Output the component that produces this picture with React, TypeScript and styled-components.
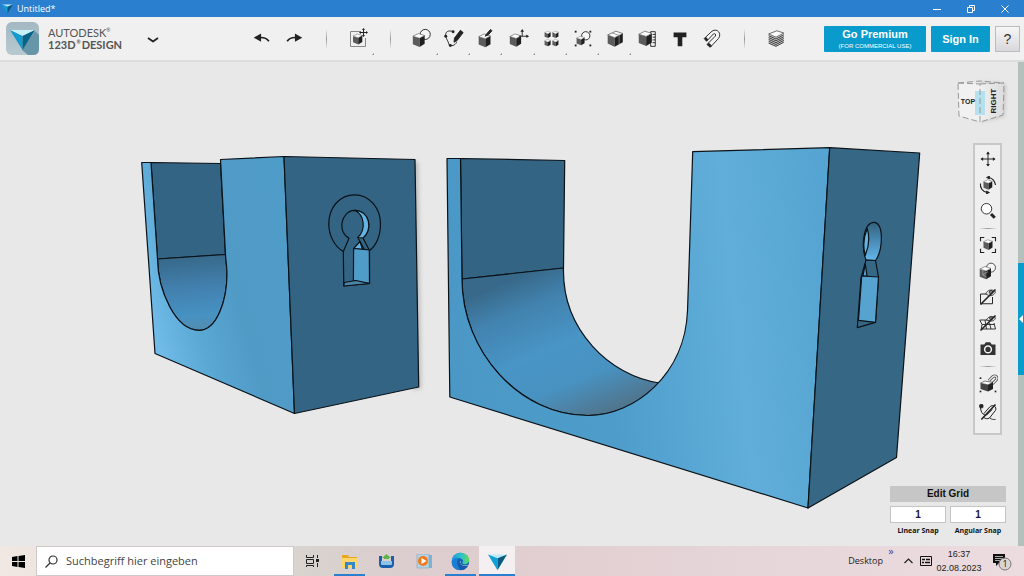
import React from "react";
import styled, { createGlobalStyle } from "styled-components";

const GlobalStyle = createGlobalStyle`
  * { box-sizing: border-box; }
  body { margin: 0; background: #e8e8e8; font-family: "Open Sans", "Noto Sans", sans-serif; }
  button, input { font: inherit; color: inherit; margin: 0; }
  button { border: 0; padding: 0; background: none; }
  svg { display: block; }
`;

const Shell = styled.div`
  display: flex;
  flex-direction: column;
  min-height: 100vh;
`;

/* ---------- title bar ---------- */

const TitleBar = styled.header`
  display: flex;
  align-items: center;
  height: 17px;
  padding: 0 2px;
  background: #2a7fcf;
  color: #fff;
`;

const WindowTitle = styled.h1`
  flex: 1;
  margin: 0 0 0 4px;
  font-size: 9px;
  line-height: 16px;
  font-weight: 400;
`;

const WindowButton = styled.button`
  display: flex;
  align-items: center;
  justify-content: center;
  width: 34px;
  height: 17px;
`;

/* ---------- tool bar ---------- */

const ToolBar = styled.div`
  display: flex;
  align-items: center;
  height: 45px;
  padding: 0 4px 0 6px;
  background: #f0f0f0;
  border-bottom: 2px solid #dcdcdc;
`;

const Brand = styled.div`
  display: flex;
  align-items: center;
  gap: 9px;
  width: 134px;
`;

const BrandName = styled.div`
  display: flex;
  flex-direction: column;
  font-family: Lato, sans-serif;
  font-size: 11px;
  line-height: 12px;
  color: #555;
  white-space: nowrap;
`;

const BrandLine = styled.span<{ $strong?: boolean }>`
  display: flex;
  gap: ${(p) => (p.$strong ? 1 : 0)}px;
  font-weight: ${(p) => (p.$strong ? 700 : 400)};
`;

const Mark = styled.span`
  font-size: 5px;
  line-height: 7px;
`;

const Tools = styled.nav`
  display: flex;
  flex: 1;
  padding-left: 80px;
`;

const ToolGroup = styled.div`
  display: grid;
  grid-template-columns: repeat(10, 1fr);
  width: 322px;
`;

const ToolButton = styled.button<{ $menu?: boolean }>`
  position: relative;
  display: flex;
  align-items: center;
  justify-content: center;
  width: 32px;
  height: 43px;

  &::after {
    content: "";
    display: ${(p) => (p.$menu ? "block" : "none")};
    position: absolute;
    right: 0;
    bottom: 5px;
    border: 1px solid #8a8a8a;
    border-top-color: transparent;
    border-left-color: transparent;
  }
`;

const MenuButton = styled(ToolButton)`
  width: 26px;
`;

const Divider = styled.div`
  display: flex;
  align-items: center;
  justify-content: center;
  width: 32px;

  &::before {
    content: "";
    width: 1px;
    height: 20px;
    background: linear-gradient(#f0f0f0, #999, #f0f0f0);
  }
`;

const Account = styled.div`
  display: flex;
  gap: 5px;
  font-family: "Liberation Sans", sans-serif;
`;

const BlueButton = styled.button<{ $width: number }>`
  width: ${(p) => p.$width}px;
  height: 26px;
  border-radius: 1px;
  background: #0a9bcd;
  color: #fff;
  font-size: 11px;
  line-height: 14px;
  font-weight: 700;
`;

const SmallPrint = styled.span`
  display: block;
  font-size: 6px;
  line-height: 10px;
  font-weight: 400;
`;

const HelpButton = styled.button`
  width: 25px;
  height: 26px;
  border: 1px solid #bcbcbc;
  background: linear-gradient(#f6f6f6, #d8d8dc);
  color: #333;
  font-size: 14px;
  line-height: 24px;
`;

/* ---------- workspace ---------- */

const Workspace = styled.main`
  display: flex;
  flex: 1;
  min-height: 484px;
`;

const Canvas = styled.section`
  position: relative;
  flex: 1;
  background: #e8e8e8;
`;

const Scene = styled.svg`
  position: absolute;
  inset: 0;
  width: 100%;
  height: 100%;
`;

const ViewCube = styled.div`
  position: absolute;
  top: 16px;
  right: 8px;
`;

const NavBar = styled.nav`
  position: absolute;
  top: 81px;
  right: 16px;
  display: flex;
  flex-direction: column;
  align-items: center;
  width: 29px;
  padding: 1px 0 7px;
  border: 2px solid #c8c8c8;
  background: #efefef;
`;

const NavButton = styled.button<{ $tall?: boolean }>`
  display: flex;
  align-items: center;
  justify-content: center;
  width: 25px;
  height: ${(p) => (p.$tall ? 28 : 26)}px;
`;

const NavRule = styled.div`
  width: 18px;
  height: 1px;
  margin: 4px 0 3px;
  background: linear-gradient(90deg, #efefef, #999, #efefef);
`;

const GridPanel = styled.form`
  position: absolute;
  right: 12px;
  bottom: 9px;
  display: grid;
  grid-template-columns: 56px 56px;
  gap: 4px;
  font-family: "Liberation Sans", sans-serif;
  font-weight: 700;
  color: #111;
  text-align: center;
`;

const EditGrid = styled.button`
  grid-column: 1 / -1;
  height: 16px;
  background: #c6c6c6;
  font-size: 10px;
  line-height: 16px;
  font-weight: 700;
`;

const SnapField = styled.label`
  display: flex;
  flex-direction: column-reverse;
  gap: 2px;
  font-family: "Open Sans", sans-serif;
  font-size: 7px;
  line-height: 12px;
  white-space: nowrap;
`;

const SnapInput = styled.input`
  width: 100%;
  height: 17px;
  padding: 0;
  border: 1px solid #c4c4c4;
  background: #fff;
  color: #1c1440;
  font-family: "Liberation Sans", sans-serif;
  font-size: 10px;
  font-weight: 700;
  text-align: center;
`;

const SideStrip = styled.aside`
  width: 6px;
  padding-top: 201px;
  background: #b5c0bd;
`;

const SideHandle = styled.button`
  display: flex;
  align-items: center;
  justify-content: center;
  width: 6px;
  height: 112px;
  background: #0a9bcd;
`;

/* ---------- task bar ---------- */

const TaskBar = styled.footer`
  display: flex;
  height: 30px;
  background: linear-gradient(90deg, #f1e8e3 0, #d8d3cf 30%, #dccdce 40%, #e2cfd1 55%, #e6d6da 75%, #ecdcdf 100%);
  color: #222;
`;

const StartButton = styled.button`
  display: flex;
  align-items: center;
  justify-content: center;
  width: 36px;
`;

const SearchBox = styled.label`
  display: flex;
  align-items: center;
  gap: 8px;
  width: 258px;
  padding-left: 8px;
  border: 1px solid #cfcac8;
  background: #fff;
`;

const SearchInput = styled.input`
  width: 220px;
  padding: 0;
  border: 0;
  outline: 0;
  font-size: 11px;
  line-height: 16px;

  &::placeholder {
    color: #444;
    opacity: 1;
  }
`;

const Tasks = styled.div`
  display: flex;
  flex: 1;
`;

const Task = styled.button<{ $open?: boolean; $active?: boolean }>`
  display: flex;
  align-items: center;
  justify-content: center;
  width: ${(p) => (p.$active ? 36 : 31)}px;
  margin: 0 ${(p) => (p.$active ? 0 : 3)}px;
  background: ${(p) => (p.$active ? "#f4eff0" : "none")};
  border-top: 2px solid transparent;
  border-bottom: 2px solid ${(p) => (p.$open ? "#2a7fcf" : "transparent")};
`;

const Tray = styled.div`
  display: flex;
  align-items: center;
  padding-right: 5px;
  font-size: 9px;
  line-height: 14px;
`;

const More = styled.button`
  align-self: flex-start;
  width: 16px;
  color: #3a4a9c;
  font-size: 11px;
  line-height: 9px;
`;

const TrayButton = styled.button<{ $wide?: boolean }>`
  display: flex;
  align-items: center;
  justify-content: center;
  width: ${(p) => (p.$wide ? 36 : 18)}px;
  height: 28px;
`;

const Clock = styled.time`
  width: 48px;
  font-family: "Liberation Sans", sans-serif;
  text-align: center;
`;

/* ---------- icons ---------- */

type CubeProps = { x?: number; y?: number; s?: number };

const Cube = ({ x = 4, y = 5, s = 1 }: CubeProps) => (
  <g transform={`translate(${x} ${y}) scale(${s})`} stroke="none">
    <path d="M0 3.500L8.500 6v11L0 13.500z" fill="#5c5c5c" />
    <path d="M8.500 6L15 2.500v10.500L8.500 17z" fill="#1f1f1f" />
    <path d="M0 3.500L7 0l8 2.500L8.500 6z" fill="#fcfcfc" />
    <path d="M0 3.500L7 0l8 2.500L8.500 6z" fill="none" stroke="#444" strokeWidth=".7" strokeLinejoin="round" />
  </g>
);

const Svg = ({ size = 22, children }: { size?: number; children: React.ReactNode }) => (
  <svg width={size} height={size} viewBox="0 0 24 24" fill="none" stroke="#222" strokeWidth="1" aria-hidden="true">
    {children}
  </svg>
);

const UndoIcon = () => (
  <Svg>
    <path d="M3 10.500l8-4.500v9z" fill="#222" stroke="none" />
    <path d="M9 10.500c5-.5 8 .5 10.500 4" strokeWidth="1.800" />
  </Svg>
);
const RedoIcon = () => (
  <Svg>
    <path d="M21 10.500l-8-4.500v9z" fill="#222" stroke="none" />
    <path d="M15 10.500c-5-.5-8 .5-10.500 4" strokeWidth="1.800" />
  </Svg>
);
const TransformIcon = () => (
  <Svg size={24}>
    <path d="M14 4.500H4.500v15h15V11" stroke="#888" />
    <Cube x={7} y={7} s={0.620} />
    <path d="M17.500 2v7M14 5.500h7" />
    <path d="M17.500 1l1.500 2h-3zM17.500 10l1.500-2h-3zM13 5.500l2-1.500v3zM22 5.500l-2-1.500v3z" fill="#222" stroke="none" />
  </Svg>
);
const PrimitivesIcon = () => (
  <Svg>
    <circle cx="15.500" cy="7" r="5.500" fill="#f6f6f6" />
    <Cube x={2} y={6} s={0.860} />
  </Svg>
);
const SketchIcon = () => (
  <Svg>
    <path d="M11 4C6 2 2 4 3 9c1 4 3 6 4 10 4 1 7-1 8-4" />
    <path d="M19 2.500l3 2.500-6.500 8.500-3.500 2 .5-4.500z" fill="#222" />
    <g fill="#222" stroke="none">
      <circle cx="11" cy="4" r="1.600" /><circle cx="3" cy="9" r="1.600" /><circle cx="8" cy="19" r="1.600" />
    </g>
  </Svg>
);
const ConstructIcon = () => (
  <Svg>
    <Cube x={4} y={6.500} s={0.860} />
    <path d="M11 9l2-3 4-4.500 1.500 1.500-4 4.500z" fill="#222" />
  </Svg>
);
const ModifyIcon = () => (
  <Svg>
    <Cube x={2} y={6.500} s={0.820} />
    <path d="M12 9h9M15.500 9V3" />
    <path d="M23 9l-3-2v4zM15.500 1l-2 3h4z" fill="#222" stroke="none" />
  </Svg>
);
const PatternIcon = () => (
  <Svg>
    <Cube x={5} y={3.500} s={0.440} /><Cube x={13.500} y={3.500} s={0.440} />
    <Cube x={5} y={12.500} s={0.440} /><Cube x={13.500} y={12.500} s={0.440} />
  </Svg>
);
const GroupIcon = () => (
  <Svg>
    <circle cx="15" cy="8.500" r="4.500" fill="#f6f6f6" />
    <Cube x={5} y={9} s={0.580} />
    <g fill="#222" stroke="none">
      <rect x="3" y="3" width="2" height="2" /><rect x="19" y="3" width="2" height="2" />
      <rect x="3" y="18" width="2" height="2" /><rect x="19" y="18" width="2" height="2" />
    </g>
  </Svg>
);
const CombineIcon = () => (
  <Svg>
    <g stroke="none">
      <path d="M4 7.500l7.500 3v10L4 17z" fill="#5c5c5c" />
      <path d="M11.500 10.500l9-4.500v9.500l-9 5z" fill="#1f1f1f" />
    </g>
    <path d="M4 7.500L13 3.500l7.500 2.500-9 4.500z" fill="#fcfcfc" stroke="#444" strokeWidth=".7" />
    <path d="M9 5.500l7.500 2.500v9.500" stroke="#888" strokeWidth=".9" />
  </Svg>
);
const MeasureIcon = () => (
  <Svg>
    <path d="M16 4h5v16h-5z" fill="#f6f6f6" />
    <path d="M21 7h-3M21 10h-3M21 13h-3M21 16h-3" />
    <Cube x={3} y={3.500} s={0.950} />
  </Svg>
);
const TextIcon = () => (
  <Svg>
    <path d="M5 5h14v5h-4.500v10h-5V10H5z" fill="#222" stroke="none" />
  </Svg>
);
const MagnetIcon = () => (
  <Svg>
    <path d="M5 10l7-6.500c6-4 11 3 7 8l-7.500 8-3.500-3L15.500 9c1.500-2-.5-3.500-2-2.500L7.500 13z" fill="#f4f4f4" />
    <path d="M5 10l-1.500 1.500 2.500 3L7.500 13zM8 16.500L6.500 18l3.500 3 1.500-1.500z" fill="#222" />
  </Svg>
);
const MaterialIcon = () => (
  <Svg>
    <path d="M4 6.500l8 3.500v10.500L4 17zM20.500 5.500v10L12 20.500V10z" fill="#ccc" stroke="none" />
    <path d="M4 6.500L13 3l7.500 2.500L12 10z" fill="#fafafa" strokeWidth=".7" />
    <path d="M4 8.500l8 3.500 8.500-4.500M4 10.500l8 3.500 8.500-4.500M4 12.500l8 3.500 8.500-4.500M4 14.500l8 3.500 8.500-4.500M4 16.500l8 3.500 8.500-4.500" strokeWidth="1" stroke="#333" />
  </Svg>
);

const PanIcon = () => (
  <Svg size={18}>
    <path d="M12 3v18M3 12h18" strokeWidth="1.300" />
    <path d="M12 2l2.500 3.500h-5zM12 22l2.500-3.500h-5zM2 12l3.500-2.500v5zM22 12l-3.500-2.500v5z" fill="#222" stroke="none" />
  </Svg>
);
const OrbitIcon = () => (
  <Svg size={18}>
    <Cube x={6} y={5} s={0.780} />
    <path d="M13 2c5 1 8 4 9 10M2 10c-1 6 3 11 9 12" strokeWidth="1.500" />
    <path d="M10 2l4-2v4zM14 22l-4-2v4z" fill="#222" />
  </Svg>
);
const ZoomIcon = () => (
  <Svg size={18}>
    <circle cx="10" cy="9" r="7" fill="#fff" strokeWidth="1.200" />
    <path d="M16 16l5 5" strokeWidth="4" />
  </Svg>
);
const FitIcon = () => (
  <Svg size={18}>
    <Cube x={6} y={5} s={0.800} />
    <path d="M7 2H2v5M17 2h5v5M7 22H2v-5M17 22h5v-5" strokeWidth="1.500" />
  </Svg>
);
const ShadedIcon = () => (
  <Svg size={18}>
    <circle cx="16" cy="7.500" r="6" fill="#f6f6f6" />
    <Cube x={1} y={6} />
    <path d="M5 9v8l5 3M5 17l7-4" stroke="#bbb" strokeWidth=".8" />
  </Svg>
);
const HideSolidIcon = () => (
  <Svg size={18}>
    <path d="M11 8H2v13h16v-9" strokeWidth="1.300" />
    <path d="M9 8c2-6 9-7 13-3-1 4-5 6-9 5z" fill="#ddd" />
    <circle cx="16" cy="5.500" r="2.300" fill="#888" />
    <path d="M22 2L2 22" strokeWidth="2.200" />
  </Svg>
);
const HideMeshIcon = () => (
  <Svg size={18}>
    <path d="M1 8h18M1 8l3 6-1 6h19l-2-8M4 14h16M8 8l2 12M14 12l2 8" strokeWidth="1.200" />
    <path d="M10 8c2-5 8-6 12-3-1 4-4 5-8 4z" fill="#ddd" />
    <circle cx="16" cy="5.500" r="2" fill="#888" />
    <path d="M22 2L2 22" strokeWidth="2.200" />
  </Svg>
);
const CameraIcon = () => (
  <Svg size={18}>
    <path d="M2 6h5l2-3h6l2 3h5v14H2z" fill="#333" stroke="none" />
    <circle cx="12" cy="12.500" r="4.500" stroke="#f4f4f4" strokeWidth="2" />
  </Svg>
);
const SnapOnIcon = () => (
  <Svg size={20}>
    <path d="M13 8l5-5c3-2 6 1 4 4l-5 5" strokeWidth="3.500" stroke="#555" />
    <path d="M13 8l5-5c3-2 6 1 4 4l-5 5" strokeWidth="1.500" stroke="#f4f4f4" />
    <path d="M3 11l9 2v8l-9-3z" fill="#444" stroke="none" />
    <path d="M12 13l6-3v8l-6 3z" fill="#222" stroke="none" />
    <path d="M3 11l5-2.500L18 10l-6 3z" fill="#f8f8f8" strokeWidth=".7" />
    <g fill="#222" stroke="none"><rect x="2" y="4" width="2" height="2" /><rect x="2" y="20" width="2" height="2" /><rect x="20" y="20" width="2" height="2" /></g>
  </Svg>
);
const SnapOffIcon = () => (
  <Svg size={20}>
    <path d="M3 6c0 5 2 9 6 10M7 14l7-8c4-4 9 0 7 4l-7 9c-3 2-5 1-8-1M10 16l7-7" strokeWidth="1.200" />
    <rect x="2" y="3" width="4" height="4" rx="1" fill="#222" />
    <path d="M14 19c2 2 4 2 7 2" />
    <path d="M21 3L4 21" strokeWidth="2" />
  </Svg>
);

const Gem = ({ size }: { size: number }) => (
  <svg width={size} height={size} viewBox="0 0 24 24" aria-hidden="true">
    <path d="M0 3l12 5 12-5z" fill="#b8ecfa" />
    <path d="M0 3l12 5v15z" fill="#12a0d4" />
    <path d="M24 3L12 8v15z" fill="#0a5a80" />
  </svg>
);

const AppLogo = () => (
  <svg width="33" height="33" viewBox="0 0 33 33" aria-hidden="true">
    <defs>
      <linearGradient id="tile" x1="0" y1="0" x2="0" y2="1">
        <stop offset="0" stopColor="#a3b8c3" /><stop offset="1" stopColor="#b9c9d0" />
      </linearGradient>
    </defs>
    <rect width="33" height="33" rx="6" fill="url(#tile)" />
    <path d="M29 9l4 4v14q0 6-6 6h-5l-6-5z" fill="#6796a9" />
    <path d="M4 8l12.500 6L29 8z" fill="#c6f0fa" />
    <path d="M4 8l12.500 6v14z" fill="#139bd0" />
    <path d="M29 8l-12.500 6v14z" fill="#086286" />
  </svg>
);

/* ---------- 3D scene ---------- */

const Models = () => (
  <Scene viewBox="0 62 1018 484" preserveAspectRatio="xMidYMid meet" role="img" aria-label="Two bracket models">
    <defs>
      <linearGradient id="frontA" gradientUnits="userSpaceOnUse" x1="142" y1="300" x2="290" y2="260">
        <stop offset="0" stopColor="#72bde9" /><stop offset=".3" stopColor="#5ba8d4" /><stop offset=".6" stopColor="#509ac6" /><stop offset="1" stopColor="#509cc8" />
      </linearGradient>
      <linearGradient id="boreA" gradientUnits="userSpaceOnUse" x1="190" y1="257" x2="196" y2="330">
        <stop offset="0" stopColor="#37698a" /><stop offset=".4" stopColor="#427fad" /><stop offset=".8" stopColor="#4692c3" /><stop offset="1" stopColor="#538cae" />
      </linearGradient>
      <linearGradient id="frontB" gradientUnits="userSpaceOnUse" x1="450" y1="340" x2="830" y2="300">
        <stop offset="0" stopColor="#4b98c6" /><stop offset=".4" stopColor="#4d9cca" /><stop offset=".75" stopColor="#61aeda" /><stop offset="1" stopColor="#56a4d1" />
      </linearGradient>
      <linearGradient id="boreB" gradientUnits="userSpaceOnUse" x1="530" y1="272" x2="590" y2="418">
        <stop offset="0" stopColor="#38698a" /><stop offset=".2" stopColor="#4282ae" /><stop offset=".5" stopColor="#4895c6" /><stop offset=".75" stopColor="#4892c1" /><stop offset="1" stopColor="#50768f" />
      </linearGradient>
      <linearGradient id="hole" x1="0" y1="0" x2="0" y2="1">
        <stop offset="0" stopColor="#34607c" /><stop offset=".35" stopColor="#427fa6" /><stop offset="1" stopColor="#64b7ea" />
      </linearGradient>
      <filter id="soft" x="-20%" y="-5%" width="150%" height="110%"><feGaussianBlur stdDeviation="2" /></filter>
    </defs>

    <path d="M410 162l8 0 3 226-8 2z" fill="#999" opacity=".6" filter="url(#soft)" />

    <g stroke="#0b1218" strokeWidth="1.200" strokeLinejoin="round">
      <path d="M151 162.500L220.500 163.500 225.500 254.500 157.500 259z" fill="#336483" />
      <path d="M157.500 259L225.500 254.500C226 262 227 268 227 274 227 300 217 330.300 199 330.300 175 330.300 158 290 157.500 259z" fill="url(#boreA)" />
      <path d="M141.700 162.500H151L157.500 259C158 290 175 330.300 199 330.300 217 330.300 227 300 227 274 227 268 226 262 225.500 254.500L220.500 159.500 284 156.500 294.500 413.500 155 353.500z" fill="url(#frontA)" />
      <path d="M284 156.500L415 159.500 418.700 387 294.500 413.500z" fill="#336483" />
      <path d="M343.300 251.500C335 247 328.800 236 328.800 224 328.800 207 340 194.800 354.700 194.800S380.500 208 380.500 224C380.500 236 376 246 369.500 250.500" fill="none" />
      <path d="M349 238.300C337 232 341 211 354.500 210.300 370 210.500 373 230 363 238L369.500 250.500V283.500L343.800 286 343.300 251.500z" fill="#336483" />
      <path d="M354.500 210.300C370 210.500 373 230 363 238L357.700 237.500C366 230 365 215 354.500 210.300z" fill="#63b4e3" />
      <path d="M360 241.500L353.600 248.500 362.500 249.500z" fill="#63b4e3" />
      <path d="M357.700 237.500L360 241.500 364.500 250" fill="none" />
      <path d="M353.600 248.500L369.300 249.800 369.500 283.500 353.400 280.500z" fill="#509cc8" />
      <path d="M343.800 286L344.300 282.500 356 280.500 369.500 283.500z" fill="#4c84a5" />
    </g>

    <g stroke="#0b1218" strokeWidth="1.200" strokeLinejoin="round">
      <path d="M460.500 158.500L564.700 160.500 563.500 268 462 279z" fill="#336483" />
      <path d="M462 279L563.500 268C562 330 610 376 659.500 383 640 403 617 415.500 588 415.500 520 415.500 462 352 462 279z" fill="url(#boreB)" />
      <path d="M447 158.500H460.500L462 279C462 352 520 415.500 588 415.500 635 415.500 685 374 687.500 311L689 267 692.700 151.700 829.700 147.700 808 508 449.800 397z" fill="url(#frontB)" />
      <path d="M829.700 147.700L919.700 153 896.500 457.500 808 508z" fill="#366785" />
      <path d="M866 260C861 247 863 222 874.500 222.300 884 224 883 250 875.500 260.500z" fill="url(#hole)" />
      <path d="M867.300 228.300Q871 242 865.300 255.300 861.500 242 867.300 228.300z" fill="#63b4e3" />
      <path d="M866 260L875.500 260.500 878.500 277 875.500 322.300 857.300 327.700 861 278z" fill="#366785" />
      <path d="M865.300 264L863 276H867z" fill="#55a6d5" />
      <path d="M861.700 276L878.500 277 875.500 322.300 858.500 320.300z" fill="#56a3d0" />
    </g>
  </Scene>
);

const CubeText = styled.text<{ $size: number }>`
  font-family: "Liberation Sans", sans-serif;
  font-size: ${(p) => p.$size}px;
  font-weight: 700;
  fill: #222;
  text-anchor: middle;
`;

const OrientationCube = () => (
  <svg width="56" height="48" viewBox="0 0 56 48" role="img" aria-label="View orientation">
    <defs>
      <filter id="cubeShade" x="-30%" y="-30%" width="160%" height="160%"><feGaussianBlur stdDeviation="2" /></filter>
      <linearGradient id="cubeRight"><stop offset="0" stopColor="#f0f0f0" /><stop offset="1" stopColor="#dcdcdc" /></linearGradient>
    </defs>
    <path d="M26 5l25 1-1 32-24 5z" fill="#888" opacity=".5" filter="url(#cubeShade)" />
    <path d="M4 5l22 1v38L5 38z" fill="#f1f1f1" />
    <path d="M26 6l24-1-1 32-23 7z" fill="url(#cubeRight)" />
    <rect x="21" y="13" width="10" height="24" fill="#b5e0ee" />
    <path d="M4 5l22 1v38L5 38zM26 6l24-1-1 32-23 7M4 5l22-2 24 2" fill="none" stroke="#999" strokeDasharray="6 3" />
    <CubeText $size={7} x="14" y="26">TOP</CubeText>
    <CubeText $size={8} transform="translate(42 23) rotate(-90)">RIGHT</CubeText>
  </svg>
);

const tools = [
  { name: "Primitives", Icon: PrimitivesIcon, menu: true },
  { name: "Sketch", Icon: SketchIcon, menu: true },
  { name: "Construct", Icon: ConstructIcon, menu: true },
  { name: "Modify", Icon: ModifyIcon, menu: true },
  { name: "Pattern", Icon: PatternIcon, menu: true },
  { name: "Grouping", Icon: GroupIcon, menu: true },
  { name: "Combine", Icon: CombineIcon, menu: true },
  { name: "Measure", Icon: MeasureIcon, menu: false },
  { name: "Text", Icon: TextIcon, menu: false },
  { name: "Snap", Icon: MagnetIcon, menu: false },
];

export default function App() {
  return (
    <Shell>
      <GlobalStyle />
      <TitleBar>
        <Gem size={11} />
        <WindowTitle>Untitled*</WindowTitle>
        <WindowButton aria-label="Minimize">
          <svg width="8" height="8" stroke="#fff"><path d="M0 4.500h8" /></svg>
        </WindowButton>
        <WindowButton aria-label="Restore">
          <svg width="8" height="8" fill="none" stroke="#fff"><path d="M.5 2.500h5v5h-5zM2.500 2.500v-2h5v5h-2" /></svg>
        </WindowButton>
        <WindowButton aria-label="Close">
          <svg width="8" height="8" stroke="#fff"><path d="M.5.5l7 7M7.500.5l-7 7" /></svg>
        </WindowButton>
      </TitleBar>

      <ToolBar>
        <Brand>
          <AppLogo />
          <BrandName>
            <BrandLine>AUTODESK<Mark>®</Mark></BrandLine>
            <BrandLine $strong>123D<Mark>®</Mark> DESIGN</BrandLine>
          </BrandName>
        </Brand>
        <MenuButton aria-label="Application menu">
          <svg width="12" height="10" fill="none" stroke="#222" strokeWidth="1.800"><path d="M1 4l5 3.500L11 4" strokeLinejoin="round" /></svg>
        </MenuButton>
        <Tools>
          <ToolButton aria-label="Undo"><UndoIcon /></ToolButton>
          <ToolButton aria-label="Redo"><RedoIcon /></ToolButton>
          <Divider />
          <ToolButton aria-label="Transform" $menu><TransformIcon /></ToolButton>
          <Divider />
          <ToolGroup>
            {tools.map(({ name, Icon, menu }) => (
              <ToolButton key={name} aria-label={name} $menu={menu}><Icon /></ToolButton>
            ))}
          </ToolGroup>
          <Divider />
          <ToolButton aria-label="Material"><MaterialIcon /></ToolButton>
        </Tools>
        <Account>
          <BlueButton $width={102}>Go Premium<SmallPrint>(FOR COMMERCIAL USE)</SmallPrint></BlueButton>
          <BlueButton $width={59}>Sign In</BlueButton>
          <HelpButton aria-label="Help">?</HelpButton>
        </Account>
      </ToolBar>

      <Workspace>
        <Canvas>
          <Models />
          <ViewCube><OrientationCube /></ViewCube>
          <NavBar aria-label="Navigation">
            <NavButton aria-label="Pan"><PanIcon /></NavButton>
            <NavButton aria-label="Orbit"><OrbitIcon /></NavButton>
            <NavButton aria-label="Zoom"><ZoomIcon /></NavButton>
            <NavRule />
            <NavButton aria-label="Fit"><FitIcon /></NavButton>
            <NavButton aria-label="Shading"><ShadedIcon /></NavButton>
            <NavButton aria-label="Hide solids"><HideSolidIcon /></NavButton>
            <NavButton aria-label="Hide meshes"><HideMeshIcon /></NavButton>
            <NavButton aria-label="Screenshot"><CameraIcon /></NavButton>
            <NavRule />
            <NavButton aria-label="Snap while moving" $tall><SnapOnIcon /></NavButton>
            <NavButton aria-label="Snap off" $tall><SnapOffIcon /></NavButton>
          </NavBar>
          <GridPanel>
            <EditGrid type="button">Edit Grid</EditGrid>
            <SnapField>Linear Snap<SnapInput defaultValue="1" /></SnapField>
            <SnapField>Angular Snap<SnapInput defaultValue="1" /></SnapField>
          </GridPanel>
        </Canvas>
        <SideStrip>
          <SideHandle aria-label="Open parts library">
            <svg width="4" height="8"><path d="M4 0v8L0 4z" fill="#fff" /></svg>
          </SideHandle>
        </SideStrip>
      </Workspace>

      <TaskBar>
        <StartButton aria-label="Start">
          <svg width="13" height="13" fill="#000"><path d="M0 2l5.500-1v5H0zM6.500 1L13 0v6H6.500zM0 7h5.500v5L0 11zM6.500 7H13v6l-6.500-1z" /></svg>
        </StartButton>
        <SearchBox aria-label="Suche">
          <svg width="13" height="13" fill="none" stroke="#333" strokeWidth="1.200"><circle cx="8" cy="5" r="4" /><path d="M5 8l-4.500 4.500" /></svg>
          <SearchInput placeholder="Suchbegriff hier eingeben" />
        </SearchBox>
        <Tasks>
          <Task aria-label="Task view">
            <svg width="13" height="12" fill="none" stroke="#222"><path d="M.5 0v2.500h7V0M.5 4.500h7v4h-7zM.5 12v-1.500h7V12M11.500 0v3M11.500 8v4" /><path d="M10 4h3v3h-3z" fill="#222" stroke="none" /></svg>
          </Task>
          <Task aria-label="Explorer" $open>
            <svg width="16" height="15"><path d="M0 1h6l1 2h8v11H0z" fill="#e9a91f" /><path d="M0 4h16v10H0z" fill="#ffd667" /><path d="M3 8h10v7h-3v-4H6v4H3z" fill="#3787cb" /></svg>
          </Task>
          <Task aria-label="Installer">
            <svg width="17" height="15"><path d="M1 2h3v5h9V2h3v8q0 4-4 4H5q-4 0-4-4z" fill="#1b5faa" /><path d="M3 7h11v3q0 1-1 1H4q-1 0-1-1z" fill="#8bc3e8" /><path d="M8.500 0L13 4h-2v1H6V4H4z" fill="#5fb54a" /></svg>
          </Task>
          <Task aria-label="Media player">
            <svg width="16" height="15"><path d="M4 1h12v13H4z" fill="#7fb1d0" /><path d="M1 0h12v14H1z" fill="#b5d2e2" stroke="#7ba7c0" strokeWidth=".6" /><circle cx="7" cy="7" r="5" fill="#f07a1c" /><path d="M5.500 4l5 3-5 3z" fill="#fff" /></svg>
          </Task>
          <Task aria-label="Browser" $open>
            <svg width="19" height="19" viewBox="0 0 24 24">
              <defs><linearGradient id="wave"><stop offset="0" stopColor="#1b9de0" /><stop offset=".55" stopColor="#2fc3c9" /><stop offset="1" stopColor="#66d85a" /></linearGradient></defs>
              <circle cx="12" cy="12" r="11" fill="#1260b4" />
              <path d="M1 11C2 4 7 1 12 1c7 0 11 5 11 9 0 5-7 7-9 4 3-3 0-6-4-6-5 0-9 3-9 6z" fill="url(#wave)" />
              <path d="M1 12c1-4 7-6 10-4-5 2-5 10 3 13-6 4-14-1-13-9z" fill="#1a7fd4" />
              <path d="M13 11c-3 5 4 8 10 5-1 2-3 4-5 5-6 0-10-6-5-10z" fill="#eadfe2" />
              <path d="M12 13c0 4 5 6 10 4-2 4-6 6-10 5-4-3-4-8 0-9z" fill="#1559a8" />
            </svg>
          </Task>
          <Task aria-label="123D Design" $open $active><Gem size={19} /></Task>
        </Tasks>
        <Tray>
          Desktop
          <More aria-label="More toolbars">»</More>
          <TrayButton aria-label="Hidden icons"><svg width="9" height="6" fill="none" stroke="#222" strokeWidth="1.200"><path d="M.5 5l4-4 4 4" /></svg></TrayButton>
          <TrayButton aria-label="Keyboard"><svg width="12" height="10" fill="none" stroke="#111"><path d="M.5.5h11v9H.5z" /><path d="M2 3.500h3M6 3.500h4M2 6.500h2M5 6.500h5" strokeWidth="1.500" /></svg></TrayButton>
          <Clock>16:37<br />02.08.2023</Clock>
          <TrayButton $wide aria-label="Notifications">
            <svg width="20" height="20" viewBox="0 0 20 20" overflow="visible">
              <path d="M2 3h12v9H8l-3 3v-3H2z" fill="#111" /><path d="M4 5.500h8M4 7.500h8M4 9.500h5" stroke="#eee" strokeWidth=".7" />
              <circle cx="14" cy="13" r="6" fill="#dcd3d5" stroke="#777" />
              <text x="14" y="16" textAnchor="middle" fontSize="9" fill="#111">1</text>
            </svg>
          </TrayButton>
        </Tray>
      </TaskBar>
    </Shell>
  );
}
